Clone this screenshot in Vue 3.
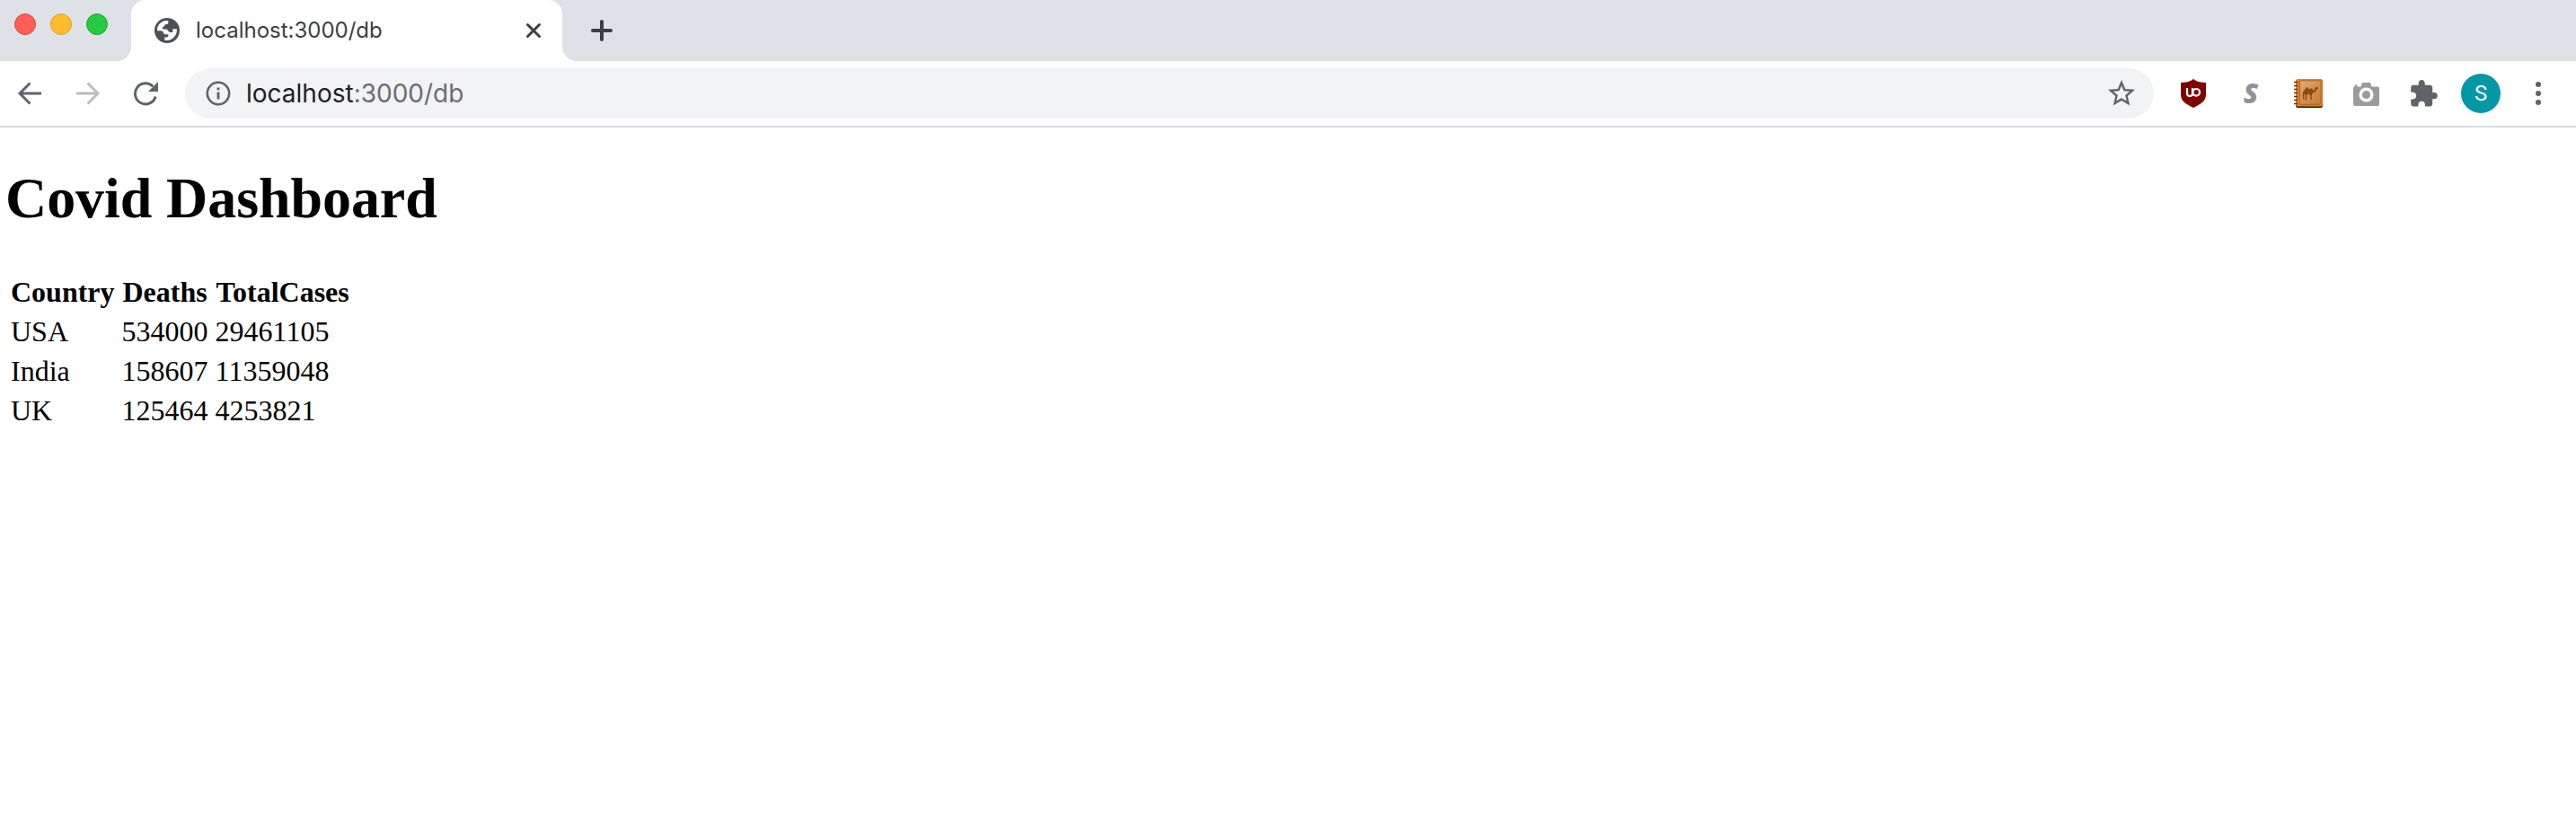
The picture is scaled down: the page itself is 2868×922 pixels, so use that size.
<script setup>
const rows = [
  { country: 'USA', deaths: '534000', cases: '29461105' },
  { country: 'India', deaths: '158607', cases: '11359048' },
  { country: 'UK', deaths: '125464', cases: '4253821' },
]
const rings = [91.500, 95.500, 99.500, 103.500, 107.500, 111.500, 115.500]
</script>

<template>
  <div class="window">
    <header class="tabstrip">
      <div class="lights">
        <i class="light red"></i><i class="light yellow"></i><i class="light green"></i>
      </div>
      <div class="tab">
        <svg class="globe" width="28" height="28" viewBox="0 0 28 28">
          <circle cx="14" cy="14" r="14" fill="#4d5156" />
          <path fill="#fff" d="M3 13C3.300 8 7 4 12 3.100L15.300 3.100V5.200C15.300 6.800 14 6.900 12.500 7C11 7.200 11.500 9.600 10 9.800C8.800 10 8.400 11 9.500 12.600H13C15 12.600 15.200 16 17.300 16H20.300V12.300H24.800C25.800 19 20 25 14 25C13 25 12 25 11.200 24.500V21.500H13.500C15 21.500 15.500 20 15.500 18.300H12C9.800 18.300 10 14.500 7.500 14.300H3Z" />
        </svg>
        <span class="tab-title">localhost:3000/db</span>
        <svg class="close" width="18" height="18" viewBox="0 0 18 18"><path d="M2.500 2.500L15.500 15.500M15.500 2.500L2.500 15.500" stroke="#3c4043" stroke-width="3" stroke-linecap="round" /></svg>
      </div>
      <svg class="plus" width="24" height="24" viewBox="0 0 24 24"><path d="M12 2V22M2 12H22" stroke="#3c4043" stroke-width="4" stroke-linecap="round" /></svg>
    </header>

    <nav class="toolbar">
      <svg class="icon back" width="28" height="28" viewBox="0 0 28 28"><path d="M14.500 2.500L3 14L14.500 25.500M3 14H27" fill="none" stroke="#5f6368" stroke-width="2.900" /></svg>
      <svg class="icon" width="28" height="28" viewBox="0 0 28 28"><path d="M13.500 2.500L25 14L13.500 25.500M25 14H1" fill="none" stroke="#babcbe" stroke-width="2.900" /></svg>
      <svg class="icon" width="28" height="28" viewBox="0 0 28 28">
        <path d="M22.300 6.200A11.600 11.600 0 1 0 25.200 17.500" fill="none" stroke="#5f6368" stroke-width="2.900" />
        <path d="M28 1V12H17Z" fill="#5f6368" />
      </svg>
      <div class="omnibox">
        <svg width="28" height="28" viewBox="0 0 28 28">
          <circle cx="14" cy="14" r="12.200" fill="none" stroke="#5f6368" stroke-width="2.600" />
          <path d="M12.600 7.500H15.400V10.200H12.600ZM12.600 12.500H15.400V20.500H12.600Z" fill="#5f6368" />
        </svg>
        <span class="url">localhost<span class="path">:3000/db</span></span>
        <svg class="star" width="30" height="30" viewBox="2 2 20 20"><path fill="#5f6368" d="M22 9.240l-7.190-.62L12 2 9.190 8.630 2 9.240l5.460 4.730L5.820 21 12 17.270 18.180 21l-1.630-7.030L22 9.240zM12 15.400l-3.760 2.270 1-4.280-3.320-2.880 4.380-.38L12 6.100l1.710 4.040 4.380.38-3.320 2.880 1 4.280L12 15.400z" /></svg>
      </div>
      <div class="extensions">
        <svg width="32" height="32" viewBox="0 0 32 32">
          <path d="M16 0C12 3 7 4 2 4V17C2 25 8 28 16 32C24 28 30 25 30 17V4C25 4 20 3 16 0Z" fill="#800000" />
          <path d="M9 10V16C9 20 15 20 15 16V10M15 18.800V16" fill="none" stroke="#fff" stroke-width="2.200" />
          <circle cx="19.200" cy="14.800" r="3.800" fill="none" stroke="#fff" stroke-width="2.200" />
        </svg>
        <span class="s-mark">S</span>
        <svg width="32" height="32" viewBox="0 88 32 32">
          <defs>
            <linearGradient id="leather" x1="0" y1="0" x2="1" y2="1"><stop offset="0" stop-color="#dfab78" /><stop offset="1" stop-color="#c9782f" /></linearGradient>
          </defs>
          <rect x="2" y="89" width="30" height="31" rx="2.500" fill="#2a1a0a" />
          <rect x="2" y="88" width="30" height="30.500" rx="2.500" fill="#dc7e20" />
          <rect x="6.500" y="89.800" width="23.500" height="26.500" rx="1.500" fill="url(#leather)" stroke="#b5651c" stroke-width="1" />
          <path v-for="y in rings" :key="y" :d="`M0 ${y}H4`" stroke="#4a3826" stroke-width="1.500" />
          <path d="M9.500 106C10 101.500 11.500 100.500 13 98.500C14 96.500 15 96.500 16 98.500C17 100 18 99 19 98.500C20.500 97.500 21 100.500 22 101C23.500 101 22.500 98 24 97.300L26 96.800L27.300 98.200L26.500 99.300H25C25 102.500 23 103.500 20.500 103.800L19.500 107L20 111H18.700L18 106.500L17 104.800L14.500 105L13.800 111.500H12.500L12.700 105.500L11.700 104.500L11 107.500L11.500 111H10.300Z" fill="#8b4a12" />
        </svg>
        <svg width="32" height="32" viewBox="0 0 32 32">
          <path d="M2 10Q2 8.500 3.500 8.500V7Q5 5.500 6.500 7V8.500H10.500L12 4H21L22.500 8.500H29Q31 8.500 31 10.500V28Q31 30 29 30H4Q2 30 2 28Z" fill="#9b9b9b" />
          <circle cx="16.500" cy="17.500" r="6.300" fill="#9b9b9b" stroke="#fff" stroke-width="3.500" />
        </svg>
        <svg width="32" height="32" viewBox="0 0 32 32"><path fill="#5f6368" transform="translate(-.6 -.4) scale(1.410)" d="M20.500 11H19V7c0-1.100-.9-2-2-2h-4V3.500C13 2.120 11.880 1 10.500 1S8 2.120 8 3.500V5H4c-1.100 0-1.990.9-1.990 2v3.800H3.500c1.490 0 2.700 1.210 2.700 2.700s-1.210 2.700-2.700 2.700H2V20c0 1.100.9 2 2 2h3.800v-1.500c0-1.490 1.210-2.700 2.700-2.700 1.490 0 2.700 1.210 2.700 2.700V22H17c1.100 0 2-.9 2-2v-4h1.500c1.380 0 2.500-1.120 2.500-2.500S21.880 11 20.500 11z" /></svg>
      </div>
      <div class="avatar">S</div>
      <svg class="menu" width="8" height="28" viewBox="0 0 8 28"><g fill="#5f6368"><circle cx="4" cy="4" r="3" /><circle cx="4" cy="14" r="3" /><circle cx="4" cy="24" r="3" /></g></svg>
    </nav>

    <main class="page">
      <h1>Covid Dashboard</h1>
      <table>
        <thead><tr><th>Country</th><th>Deaths</th><th class="cases">TotalCases</th></tr></thead>
        <tbody>
          <tr v-for="r in rows" :key="r.country"><td>{{ r.country }}</td><td>{{ r.deaths }}</td><td>{{ r.cases }}</td></tr>
        </tbody>
      </table>
    </main>
  </div>
</template>

<style>
body { margin: 0; background: #fff; }
</style>

<style scoped>
.window { width: 2868px; height: 922px; overflow: hidden; background: #fff; font-family: Inter, "Liberation Sans", sans-serif; }
svg { display: block; flex: none; }
.tabstrip { display: flex; height: 68px; background: #dee1e6; }
.lights { display: flex; gap: 16px; width: 130px; padding: 15px 0 0 16px; box-sizing: border-box; }
.light { width: 24px; height: 24px; border-radius: 50%; box-sizing: border-box; }
.red { background: #ff5f57; border: 1px solid #e2463f; }
.yellow { background: #ffbd2e; border: 1px solid #e0a028; }
.green { background: #28ca41; border: 1px solid #14ae2b; }
.tab {
  display: flex; align-items: center; width: 512px; height: 68px; padding: 0 23px 0 42px; box-sizing: border-box;
  background:
    radial-gradient(circle at 0 0, transparent 15.500px, #fff 16.500px) 0 100% / 16px 16px no-repeat,
    radial-gradient(circle at 100% 0, transparent 15.500px, #fff 16.500px) 100% 100% / 16px 16px no-repeat,
    radial-gradient(circle at 100% 100%, #fff 15.500px, transparent 16.500px) 16px 0 / 16px 16px no-repeat,
    radial-gradient(circle at 0 100%, #fff 15.500px, transparent 16.500px) 480px 0 / 16px 16px no-repeat,
    linear-gradient(#fff, #fff) 16px 16px / 480px 52px no-repeat,
    linear-gradient(#fff, #fff) 32px 0 / 448px 16px no-repeat;
}
.tab-title { margin-left: 18px; font-size: 24px; line-height: 30px; color: #3c4043; white-space: nowrap; }
.close { margin-left: auto; margin-right: 16px; }
.plus { margin: 22px 0 0 16px; }
.toolbar { display: flex; align-items: center; height: 74px; padding-left: 20px; box-sizing: border-box; border-bottom: 2px solid #dadce0; }
.icon { margin-right: 36px; }
.back { margin-left: -1px; margin-right: 37px; }
.omnibox { display: flex; align-items: center; width: 2192px; height: 56px; margin-left: -6px; padding: 0 21px 0 23px; box-sizing: border-box; border-radius: 28px; background: #f1f3f4; }
.url { margin-left: 17px; font-size: 28px; line-height: 36px; color: #202124; white-space: nowrap; }
.path { color: #6b6e71; }
.star { margin-left: auto; }
.extensions { display: flex; align-items: center; gap: 32px; margin-left: 28px; }
.s-mark { width: 32px; height: 42px; margin: -5px 0; font: italic 800 30px/42px "Open Sans", sans-serif; text-align: center; color: #929292; }
.avatar { width: 44px; height: 44px; margin-left: 26px; border-radius: 50%; background: #0097a7; color: #fff; font: 24px/44px Roboto, sans-serif; text-align: center; }
.menu { margin-left: 38px; }
.page { padding: 0 6px; color: #000; font-family: "Liberation Serif", "Times New Roman", serif; }
h1 { margin: 0; padding-top: 42px; font-size: 64px; line-height: 74px; font-weight: bold; letter-spacing: -0.080px; }
table { margin-top: 43px; border-collapse: separate; border-spacing: 4px; font-size: 32px; line-height: 36px; }
th, td { padding: 2px; text-align: left; }
th { text-align: center; }
th.cases { padding-left: 3px; }
</style>
